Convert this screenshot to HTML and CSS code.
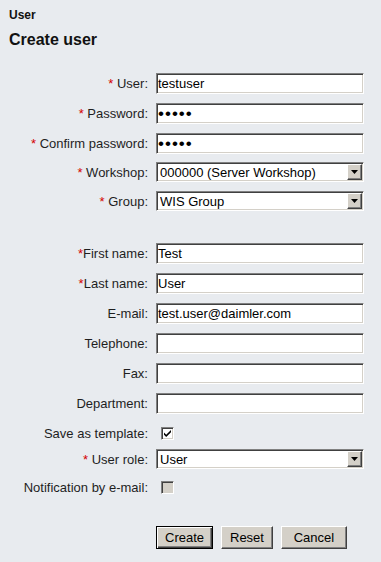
FILE: index.html
```html
<!DOCTYPE html>
<html lang="en">
<head>
    <meta charset="UTF-8">
    <meta name="viewport" content="width=device-width, initial-scale=1.0">
    <title>Create user</title>
    <link rel="stylesheet" href="styles.css">
</head>
<body>
    <div class="page">
        <div class="crumb">User</div>
        <h1>Create user</h1>
        <form class="form">
            <div class="row">
                <label for="user"><span class="req">*</span> User:</label>
                <input class="field" type="text" id="user" value="testuser">
            </div>
            <div class="row">
                <label for="pass"><span class="req">*</span> Password:</label>
                <input class="field secret" type="password" id="pass" value="abcde">
            </div>
            <div class="row">
                <label for="pass2"><span class="req">*</span> Confirm password:</label>
                <input class="field secret" type="password" id="pass2" value="abcde">
            </div>
            <div class="row short first-select">
                <label for="workshop"><span class="req">*</span> Workshop:</label>
                <div class="select">
                    <select id="workshop"><option>000000 (Server Workshop)</option></select>
                    <span class="arrow"><svg width="7" height="4" viewBox="0 0 7 4"><path d="M0 0h7L3.5 4z" fill="#000"/></svg></span>
                </div>
            </div>
            <div class="row short">
                <label for="group"><span class="req">*</span> Group:</label>
                <div class="select">
                    <select id="group"><option>WIS Group</option></select>
                    <span class="arrow"><svg width="7" height="4" viewBox="0 0 7 4"><path d="M0 0h7L3.5 4z" fill="#000"/></svg></span>
                </div>
            </div>

            <div class="row new-block">
                <label for="first"><span class="req">*</span>First name:</label>
                <input class="field" type="text" id="first" value="Test">
            </div>
            <div class="row">
                <label for="last"><span class="req">*</span>Last name:</label>
                <input class="field" type="text" id="last" value="User">
            </div>
            <div class="row">
                <label for="mail">E-mail:</label>
                <input class="field" type="text" id="mail" value="test.user@daimler.com">
            </div>
            <div class="row">
                <label for="phone">Telephone:</label>
                <input class="field" type="text" id="phone">
            </div>
            <div class="row">
                <label for="fax">Fax:</label>
                <input class="field" type="text" id="fax">
            </div>
            <div class="row">
                <label for="dept">Department:</label>
                <input class="field" type="text" id="dept">
            </div>
            <div class="row">
                <label>Save as template:</label>
                <span class="box"><svg width="9" height="9" viewBox="0 0 9 9"><path d="M1 3.5l2.2 2.3L8 1v2.2L3.2 8 1 5.7z" fill="#000"/></svg></span>
            </div>
            <div class="row short role">
                <label for="role"><span class="req">*</span> User role:</label>
                <div class="select">
                    <select id="role"><option>User</option></select>
                    <span class="arrow"><svg width="7" height="4" viewBox="0 0 7 4"><path d="M0 0h7L3.5 4z" fill="#000"/></svg></span>
                </div>
            </div>
            <div class="row notify">
                <label>Notification by e-mail:</label>
                <span class="box off"></span>
            </div>

            <div class="buttons">
                <button type="button" class="btn default">Create</button>
                <button type="button" class="btn">Reset</button>
                <button type="button" class="btn wide">Cancel</button>
            </div>
        </form>
    </div>
</body>
</html>
```

FILE: styles.css
```css
body {
    margin: 0;
    background-color: #e8ebef;
    font-family: "Liberation Sans", Arial, sans-serif;
    font-size: 13px;
    color: #1e1e1e;
}
.page {
    padding: 8px 9px;
}
.crumb {
    font-size: 12px;
    font-weight: bold;
    line-height: 14px;
    color: #111;
}
h1 {
    margin: 9px 0 0;
    font-size: 16px;
    line-height: 18px;
    color: #111;
}
.form {
    margin-top: 24px;
    display: flex;
    flex-direction: column;
    gap: 9px;
}
.row {
    display: grid;
    grid-template-columns: 139px 208px;
    column-gap: 8px;
    align-items: center;
    height: 21px;
}
.row label {
    text-align: right;
    white-space: nowrap;
}
.req {
    color: #d40000;
}
.row.short {
    height: 20px;
}
.first-select {
    margin-top: -1px;
}
.new-block {
    margin-top: 23px;
}
.role {
    margin-top: -4px;
}
.notify {
    margin-top: -1px;
}
.field,
.select select {
    box-sizing: border-box;
    width: 208px;
    height: 21px;
    margin: 0;
    padding: 0 1px;
    border: 1px solid;
    border-color: #808080 #ffffff #ffffff #808080;
    box-shadow: inset 1px 1px 0 #404040, inset -1px -1px 0 #d4d0c8;
    background-color: #fff;
    font-family: "Liberation Sans", Arial, sans-serif;
    font-size: 13px;
    color: #000;
    outline: none;
}
.secret {
    font-size: 17px;
    letter-spacing: 1px;
}
.select {
    position: relative;
    height: 20px;
}
.select select {
    height: 20px;
    padding: 0 0 0 3px;
    appearance: none;
    -webkit-appearance: none;
}
.arrow {
    position: absolute;
    top: 2px;
    right: 2px;
    box-sizing: border-box;
    width: 15px;
    height: 16px;
    display: flex;
    align-items: center;
    justify-content: center;
    background-color: #d4d0c8;
    border: 1px solid;
    border-color: #ffffff #404040 #404040 #ffffff;
    box-shadow: inset -1px -1px 0 #808080;
    pointer-events: none;
}
.box {
    box-sizing: border-box;
    width: 13px;
    height: 13px;
    margin-left: 5px;
    display: flex;
    align-items: center;
    justify-content: center;
    background-color: #fff;
    border: 1px solid;
    border-color: #808080 #ffffff #ffffff #808080;
    box-shadow: inset 1px 1px 0 #404040, inset -1px -1px 0 #d4d0c8;
}
.box.off {
    background-color: #d4d0c8;
}
.buttons {
    margin: 19px 0 0 147px;
    display: flex;
    gap: 8px;
}
.btn {
    box-sizing: border-box;
    height: 23px;
    padding: 0 8px;
    background-color: #d4d0c8;
    border: 1px solid;
    border-color: #ffffff #404040 #404040 #ffffff;
    box-shadow: inset -1px -1px 0 #808080;
    font-family: "Liberation Sans", Arial, sans-serif;
    font-size: 13px;
    color: #000;
}
.btn.default {
    border: 1px solid #000;
    box-shadow: inset 1px 1px 0 #fff, inset -1px -1px 0 #404040, inset -2px -2px 0 #808080;
}
.btn.wide {
    width: 66px;
}
.btn.default {
    width: 57px;
}
```
